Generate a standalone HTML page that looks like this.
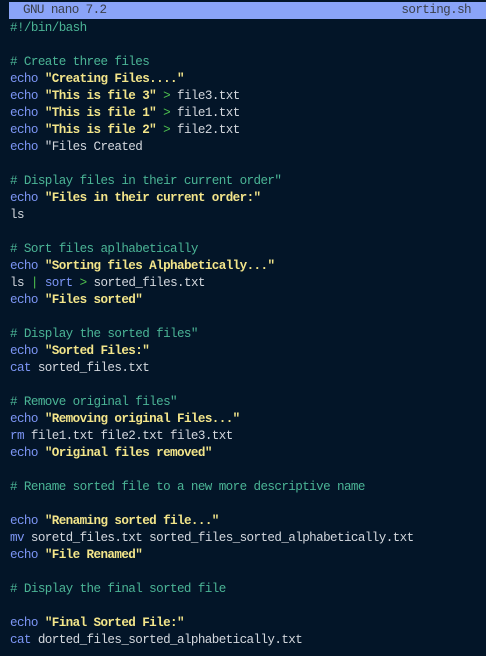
<!DOCTYPE html>
<html><head><meta charset="utf-8"><style>
html,body{margin:0;padding:0;background:#031528;width:486px;height:656px;overflow:hidden}
body{font-family:"Liberation Mono",monospace;font-size:12.6px;letter-spacing:-0.6px;color:#d4d8de}
.hdr{position:absolute;left:9px;right:0;top:2px;height:17px;background:#8aa4f8;color:#3a3f4a;line-height:17px}
.hdr .l{position:absolute;left:14px}
.hdr .r{position:absolute;right:15px}
pre{position:absolute;left:10px;top:20px;margin:0;font:inherit;line-height:17px;white-space:pre}
.c{color:#4bb596}
.e{color:#7c95f4}
.s{color:#f3e58a;font-weight:bold}
.g{color:#4fc24f}
</style></head><body>
<div class="hdr"><span class="l">GNU nano 7.2</span><span class="r">sorting.sh</span></div>
<pre><span class="c">#!/bin/bash</span>

<span class="c"># Create three files</span>
<span class="e">echo</span> <span class="s">"Creating Files...."</span>
<span class="e">echo</span> <span class="s">"This is file 3"</span> <span class="g">&gt;</span> file3.txt
<span class="e">echo</span> <span class="s">"This is file 1"</span> <span class="g">&gt;</span> file1.txt
<span class="e">echo</span> <span class="s">"This is file 2"</span> <span class="g">&gt;</span> file2.txt
<span class="e">echo</span> "Files Created

<span class="c"># Display files in their current order"</span>
<span class="e">echo</span> <span class="s">"Files in their current order:"</span>
ls

<span class="c"># Sort files aplhabetically</span>
<span class="e">echo</span> <span class="s">"Sorting files Alphabetically..."</span>
ls <span class="g">|</span> <span class="e">sort</span> <span class="g">&gt;</span> sorted_files.txt
<span class="e">echo</span> <span class="s">"Files sorted"</span>

<span class="c"># Display the sorted files"</span>
<span class="e">echo</span> <span class="s">"Sorted Files:"</span>
<span class="e">cat</span> sorted_files.txt

<span class="c"># Remove original files"</span>
<span class="e">echo</span> <span class="s">"Removing original Files..."</span>
<span class="e">rm</span> file1.txt file2.txt file3.txt
<span class="e">echo</span> <span class="s">"Original files removed"</span>

<span class="c"># Rename sorted file to a new more descriptive name</span>

<span class="e">echo</span> <span class="s">"Renaming sorted file..."</span>
<span class="e">mv</span> soretd_files.txt sorted_files_sorted_alphabetically.txt
<span class="e">echo</span> <span class="s">"File Renamed"</span>

<span class="c"># Display the final sorted file</span>

<span class="e">echo</span> <span class="s">"Final Sorted File:"</span>
<span class="e">cat</span> dorted_files_sorted_alphabetically.txt
</pre>
</body></html>
